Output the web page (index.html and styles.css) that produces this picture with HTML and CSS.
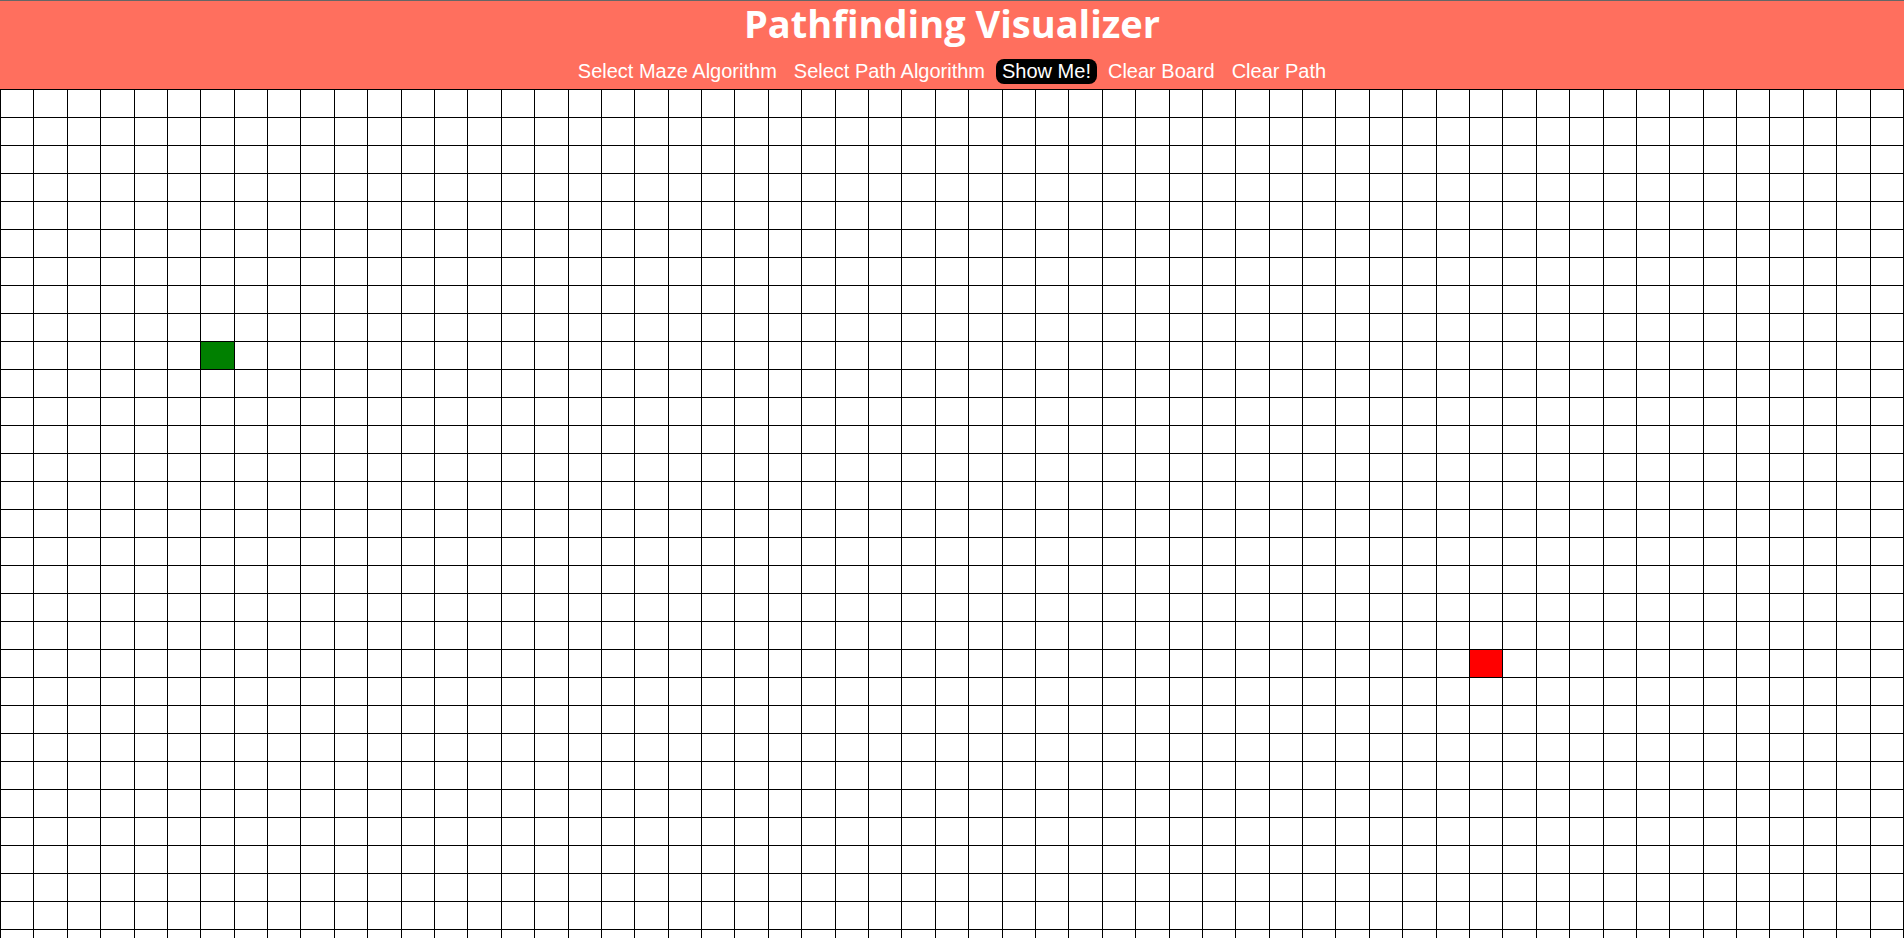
FILE: index.html
```html
<!DOCTYPE html>
<html lang="en">
<head>
<meta charset="utf-8">
<title>Pathfinding Visualizer</title>
<link rel="stylesheet" href="styles.css">
</head>
<body>
<header class="header">
  <h1 class="title">Pathfinding Visualizer</h1>
  <nav class="controls">
    <button class="control">Select Maze Algorithm</button>
    <button class="control">Select Path Algorithm</button>
    <button class="control control-primary">Show Me!</button>
    <button class="control">Clear Board</button>
    <button class="control">Clear Path</button>
  </nav>
</header>
<main class="board-wrap">
  <div class="board" id="board"></div>
</main>
<script src="script.js"></script>
</body>
</html>
```

FILE: styles.css
```css
html, body {
  margin: 0;
  padding: 0;
  overflow: hidden;
}

body {
  background: #ffffff;
  font-family: "Liberation Sans", Arial, sans-serif;
}

.header {
  border-top: 1px solid #666666;
  background: #ff6f5e;
  height: 88px;
  display: flex;
  flex-direction: column;
  align-items: center;
}

.title {
  margin: 0;
  font-family: "Open Sans", "Noto Sans", sans-serif;
  font-weight: 700;
  font-size: 38px;
  line-height: 44px;
  color: #ffffff;
}

.controls {
  margin-top: 14px;
  display: flex;
  gap: 5px;
}

.control {
  font-family: "Liberation Sans", Arial, sans-serif;
  font-size: 20px;
  line-height: 23px;
  padding: 1px 6px;
  border: none;
  background: transparent;
  color: #ffffff;
  cursor: pointer;
}

.control-primary {
  background: #000000;
  border-radius: 8px;
}

.board-wrap {
  height: calc(100vh - 89px);
  overflow: hidden;
}

.board {
  display: grid;
  grid-template-columns: repeat(57, 1fr);
  grid-auto-rows: 28px;
  border-top: 1px solid #000000;
  border-left: 1px solid #000000;
}

.cell {
  box-sizing: border-box;
  border-right: 1px solid #000000;
  border-bottom: 1px solid #000000;
  background: #ffffff;
}

.cell-start {
  background: #008000;
}

.cell-end {
  background: #ff0000;
}
```

FILE: script.js
```js
const board = document.getElementById('board');
const ROWS = 32;
const COLS = 57;
for (let r = 0; r < ROWS; r++) {
  for (let c = 0; c < COLS; c++) {
    const cell = document.createElement('div');
    cell.className = 'cell';
    if (r === 9 && c === 6) cell.classList.add('cell-start');
    if (r === 20 && c === 44) cell.classList.add('cell-end');
    board.appendChild(cell);
  }
}
```
